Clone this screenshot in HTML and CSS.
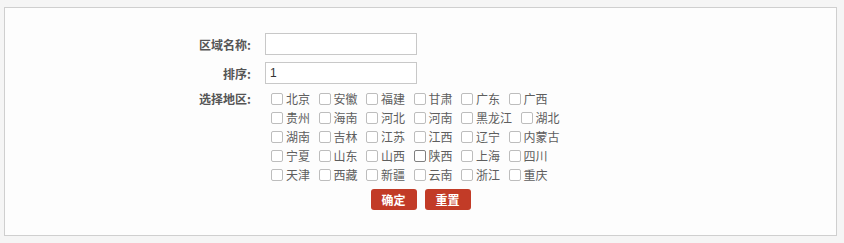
FILE: index.html
```html
<!DOCTYPE html>
<html lang="zh">
<head>
<meta charset="utf-8">
<link rel="stylesheet" href="styles.css">
</head>
<body>
<div class="panel">
  <form class="form">
    <div class="row">
      <label class="lbl">区域名称:</label>
      <input class="txt" type="text" value="">
    </div>
    <div class="row">
      <label class="lbl">排序:</label>
      <input class="txt" type="text" value="1">
    </div>
    <div class="row row-areas">
      <label class="lbl lbl-areas">选择地区:</label>
      <div class="areas">
        <div class="arow">
          <label class="item"><input type="checkbox">北京</label>
          <label class="item"><input type="checkbox">安徽</label>
          <label class="item"><input type="checkbox">福建</label>
          <label class="item"><input type="checkbox">甘肃</label>
          <label class="item"><input type="checkbox">广东</label>
          <label class="item"><input type="checkbox">广西</label>
        </div>
        <div class="arow">
          <label class="item"><input type="checkbox">贵州</label>
          <label class="item"><input type="checkbox">海南</label>
          <label class="item"><input type="checkbox">河北</label>
          <label class="item"><input type="checkbox">河南</label>
          <label class="item"><input type="checkbox">黑龙江</label>
          <label class="item"><input type="checkbox">湖北</label>
        </div>
        <div class="arow">
          <label class="item"><input type="checkbox">湖南</label>
          <label class="item"><input type="checkbox">吉林</label>
          <label class="item"><input type="checkbox">江苏</label>
          <label class="item"><input type="checkbox">江西</label>
          <label class="item"><input type="checkbox">辽宁</label>
          <label class="item"><input type="checkbox">内蒙古</label>
        </div>
        <div class="arow">
          <label class="item"><input type="checkbox">宁夏</label>
          <label class="item"><input type="checkbox">山东</label>
          <label class="item"><input type="checkbox">山西</label>
          <label class="item"><input type="checkbox" class="hover">陕西</label>
          <label class="item"><input type="checkbox">上海</label>
          <label class="item"><input type="checkbox">四川</label>
        </div>
        <div class="arow">
          <label class="item"><input type="checkbox">天津</label>
          <label class="item"><input type="checkbox">西藏</label>
          <label class="item"><input type="checkbox">新疆</label>
          <label class="item"><input type="checkbox">云南</label>
          <label class="item"><input type="checkbox">浙江</label>
          <label class="item"><input type="checkbox">重庆</label>
        </div>
      </div>
    </div>
    <div class="actions">
      <button type="button" class="btn">确定</button>
      <button type="button" class="btn">重置</button>
    </div>
  </form>
</div>
</body>
</html>
```
FILE: styles.css
```css
html, body {
  margin: 0;
  padding: 0;
}
body {
  background: #f5f5f5;
  font-family: "Noto Sans CJK SC", "Noto Sans", sans-serif;
  font-size: 12px;
  color: #555;
}
.panel {
  box-sizing: border-box;
  margin: 7px 0 0 4px;
  width: 833px;
  height: 229px;
  background: #fdfdfd;
  border: 1px solid #cfcfcf;
}
.form {
  margin: 0;
  padding-top: 25px;
  display: flex;
  flex-direction: column;
}
.row {
  display: grid;
  grid-template-columns: 246px 1fr;
  column-gap: 14px;
  align-items: center;
  margin-bottom: 7px;
}
.row-areas {
  align-items: start;
  margin-top: -2px;
  margin-bottom: 0;
}
.lbl {
  text-align: right;
  font-weight: bold;
  color: #555;
  line-height: 19px;
}
.txt {
  box-sizing: border-box;
  width: 152px;
  height: 22px;
  margin: 0;
  padding: 0 4px;
  border: 1px solid #c8c8c8;
  background: #fff;
  font-family: "Liberation Sans", "Noto Sans CJK SC", sans-serif;
  font-size: 12px;
  color: #333;
  outline: none;
}
.areas {
  display: flex;
  flex-direction: column;
  padding-left: 6px;
}
.arow {
  display: flex;
  height: 19px;
  align-items: center;
}
.item {
  display: flex;
  align-items: center;
  margin-right: 8.5px;
  line-height: 19px;
  color: #5e5e5e;
}
.item input {
  appearance: none;
  -webkit-appearance: none;
  box-sizing: border-box;
  width: 12px;
  height: 12px;
  margin: 0 3px 0 0;
  border: 1px solid #bdbdbd;
  border-radius: 2px;
  background: #fff;
}
.item input.hover {
  border-color: #808080;
}
.actions {
  display: flex;
  justify-content: center;
  gap: 8px;
  margin-top: 5px;
}
.btn {
  width: 46px;
  height: 21px;
  padding: 0;
  border: none;
  border-radius: 3px;
  background: #c23b27;
  color: #fff;
  font-family: "Noto Sans CJK SC", sans-serif;
  font-size: 12px;
  font-weight: bold;
  line-height: 21px;
}
```
